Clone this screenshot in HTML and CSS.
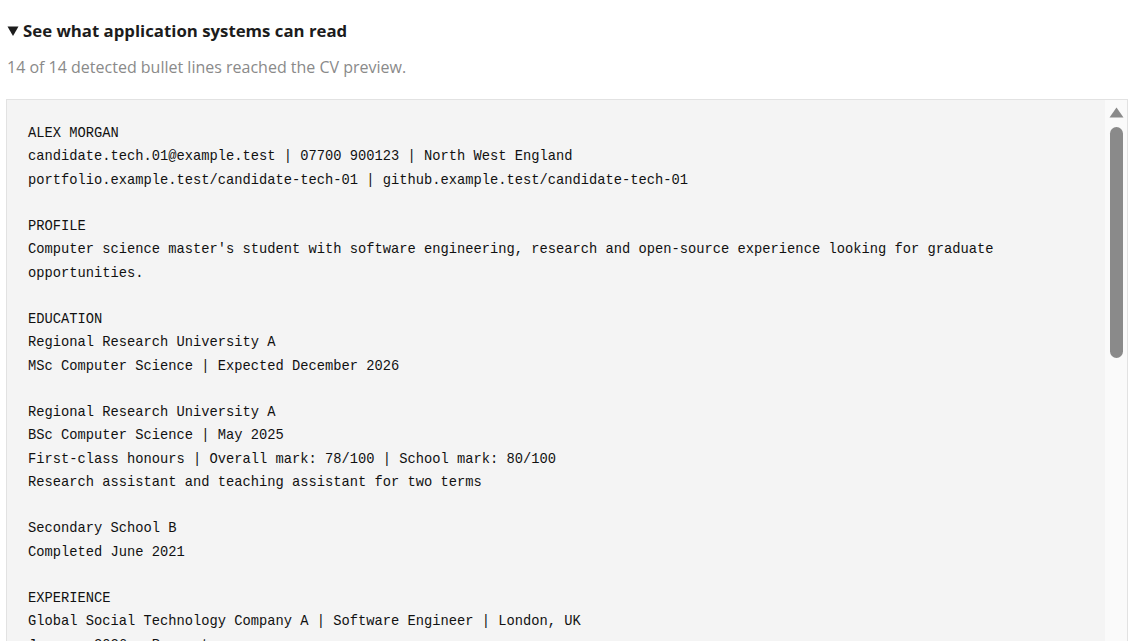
FILE: index.html
```html
<!DOCTYPE html>
<html lang="en">
<head>
<meta charset="utf-8">
<title>Parsed CV preview</title>
<link rel="stylesheet" href="styles.css">
</head>
<body>
<details class="readout" open>
  <summary class="readout-summary"><svg class="readout-caret" width="12" height="10" viewBox="0 0 12 10"><path d="M0.5 0.5 L11.5 0.5 L6 10 Z" fill="#1c1c1c"/></svg>See what application systems can read</summary>
  <p class="readout-note">14 of 14 detected bullet lines reached the CV preview.</p>
  <div class="readout-box">
    <pre class="readout-text">ALEX MORGAN
candidate.tech.01@example.test | 07700 900123 | North West England
portfolio.example.test/candidate-tech-01 | github.example.test/candidate-tech-01

PROFILE
Computer science master's student with software engineering, research and open-source experience looking for graduate opportunities.

EDUCATION
Regional Research University A
MSc Computer Science | Expected December 2026

Regional Research University A
BSc Computer Science | May 2025
First-class honours | Overall mark: 78/100 | School mark: 80/100
Research assistant and teaching assistant for two terms

Secondary School B
Completed June 2021

EXPERIENCE
Global Social Technology Company A | Software Engineer | London, UK
January 2026 – Present
- Built internal tooling for service health dashboards used by four product teams
- Reduced build times by 35% by caching dependency resolution in CI pipelines
- Wrote integration tests covering payment and notification services

Research Lab C | Research Assistant | Manchester, UK
June 2024 – September 2025
- Implemented data processing pipelines for a graph learning research project
- Co-authored a workshop paper on efficient embedding retrieval

SKILLS
Languages: Python, Go, TypeScript, Java, C++, SQL</pre>
    <div class="scrollbar" aria-hidden="true">
      <svg class="scrollbar-arrow" width="15" height="11" viewBox="0 0 15 11"><path d="M7.5 0.5 L14.5 10.5 L0.5 10.5 Z" fill="#8a8a8a"/></svg>
      <div class="scrollbar-thumb"></div>
    </div>
  </div>
</details>
</body>
</html>
```

FILE: styles.css
```css
html, body {
  margin: 0;
  height: 100%;
  overflow: hidden;
  background: #ffffff;
}

body {
  padding: 0 11px 0 6px;
  font-family: "Open Sans", "Noto Sans", sans-serif;
  color: #1f1f1f;
}

.readout {
  padding-top: 19px;
}

.readout-summary {
  list-style: none;
  display: flex;
  align-items: center;
  font-size: 16.8px;
  font-weight: 700;
  line-height: 24px;
  color: #1c1c1c;
  cursor: pointer;
  padding-left: 1px;
}

.readout-summary::-webkit-details-marker {
  display: none;
}

.readout-caret {
  display: block;
  margin-right: 4px;
}

.readout-note {
  margin: 14px 0 0 1px;
  font-size: 16px;
  line-height: 20px;
  color: #8a8a8a;
}

.readout-box {
  margin-top: 22px;
  height: 560px;
  display: flex;
  background: #f4f4f4;
  border: 1px solid #e2e2e2;
}

.readout-text {
  flex: 1;
  margin: 0;
  overflow: hidden;
  padding: 22px 21px 20px;
  font-family: "Liberation Mono", "DejaVu Sans Mono", monospace;
  font-size: 13.75px;
  line-height: 23.25px;
  color: #111111;
  white-space: pre-wrap;
}

/* static vertical scrollbar drawn beside the text */
.scrollbar {
  width: 22px;
  flex: none;
  background: #fafafa;
  display: flex;
  flex-direction: column;
  align-items: center;
  padding-top: 7px;
}

.scrollbar-arrow {
  display: block;
}

.scrollbar-thumb {
  margin-top: 9px;
  width: 13px;
  height: 231px;
  border-radius: 7px;
  background: #8a8a8a;
}
```
